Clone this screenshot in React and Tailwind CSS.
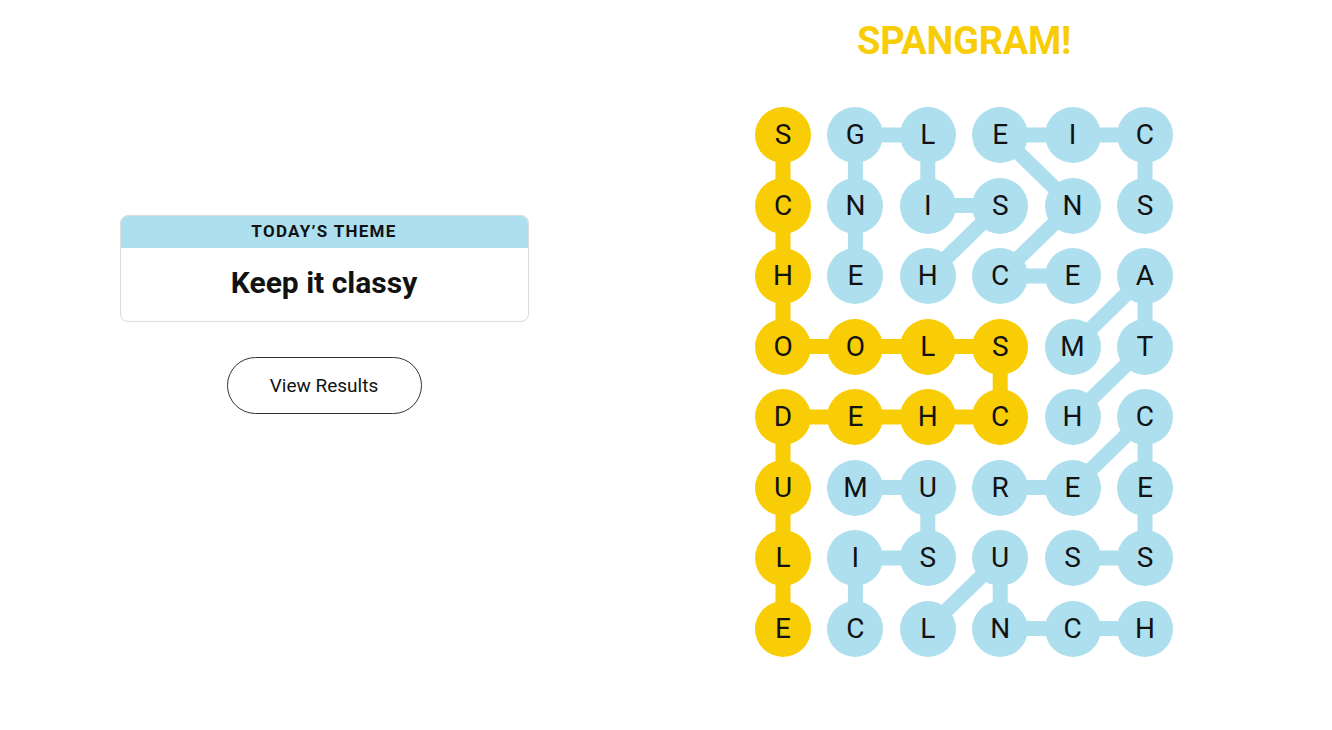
import React from "react";

const BLUE = "#aedfee";
const YELLOW = "#f8cd05";

const grid = [
  "SGLEIC",
  "CNISNS",
  "HEHCEA",
  "OOLSMT",
  "DEHCHC",
  "UMUREE",
  "LISUSS",
  "ECLNCH",
];

// words as lists of [row, col]
const spangram = [
  [0, 0], [1, 0], [2, 0], [3, 0], [3, 1], [3, 2], [3, 3],
  [4, 3], [4, 2], [4, 1], [4, 0], [5, 0], [6, 0], [7, 0],
];

const words = [
  [[2, 1], [1, 1], [0, 1], [0, 2], [1, 2], [1, 3], [2, 2]],
  [[1, 5], [0, 5], [0, 4], [0, 3], [1, 4], [2, 3], [2, 4]],
  [[3, 4], [2, 5], [3, 5], [4, 4]],
  [[5, 3], [5, 4], [4, 5], [5, 5], [6, 5], [6, 4]],
  [[5, 1], [5, 2], [6, 2], [6, 1], [7, 1]],
  [[7, 2], [6, 3], [7, 3], [7, 4], [7, 5]],
];

const COL = 72.4;
const ROW = 70.5;
const R = 28;

const cx = (c) => R + c * COL;
const cy = (r) => R + r * ROW;

const isSpan = (r, c) => spangram.some(([a, b]) => a === r && b === c);

const Path = ({ cells, color }) => (
  <polyline
    points={cells.map(([r, c]) => `${cx(c)},${cy(r)}`).join(" ")}
    fill="none"
    stroke={color}
    strokeWidth="15"
    strokeLinejoin="round"
  />
);

const Board = () => (
  <div className="relative">
    <svg
      className="absolute left-0 top-0"
      width={R * 2 + COL * 5}
      height={R * 2 + ROW * 7}
    >
      <Path cells={spangram} color={YELLOW} />
      {words.map((w, i) => (
        <Path key={i} cells={w} color={BLUE} />
      ))}
    </svg>
    <div className="relative grid grid-cols-[repeat(6,56px)] gap-x-[16.4px] gap-y-[14.5px]">
      {grid.map((row, r) =>
        row.split("").map((ch, c) => (
          <div
            key={`${r}-${c}`}
            className={`w-14 h-14 rounded-full flex items-center justify-center text-[28px] leading-none text-[#121212] ${
              isSpan(r, c) ? "bg-[#f8cd05]" : "bg-[#aedfee]"
            }`}
          >
            {ch}
          </div>
        ))
      )}
    </div>
  </div>
);

export default function App() {
  return (
    <div className="w-[1332px] h-[730px] bg-white flex font-['Roboto',sans-serif] text-[#121212]">
      <div className="w-[648px] flex flex-col items-center pt-[215px]">
        <div className="w-[409px] h-[107px] rounded-lg border border-[#dcdcdc] overflow-hidden flex flex-col">
          <div className="h-8 bg-[#aedfee] flex items-center justify-center text-[17px] font-bold tracking-[1.3px] uppercase">
            Today’s Theme
          </div>
          <div className="flex-1 flex items-center justify-center pb-1 text-[30px] font-bold">
            Keep it classy
          </div>
        </div>
        <button className="mt-[35px] w-[195px] h-[57px] rounded-full border border-[#333] text-[19px] text-[#121212] bg-white pt-[2px]">
          View Results
        </button>
      </div>
      <div className="w-[632px] flex flex-col items-center pt-[22px]">
        <div className="text-[38px] leading-none font-bold text-[#f8cd05] tracking-[-0.3px]">
          SPANGRAM!
        </div>
        <div className="mt-[47px]">
          <Board />
        </div>
      </div>
    </div>
  );
}
